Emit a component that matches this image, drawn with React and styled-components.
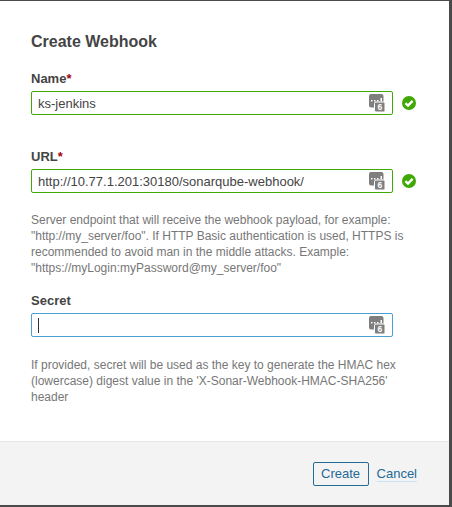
import React from 'react';
import styled, { createGlobalStyle } from 'styled-components';

const Global = createGlobalStyle`
  html, body { margin: 0; padding: 0; background: #fff; }
  body { font-family: "Liberation Sans", Arial, sans-serif; color: #444; }
`;
const Modal = styled.div`
  width: 452px;
  height: 507px;
  box-sizing: border-box;
  display: flex;
  flex-direction: column;
  border-top: 1px solid #4a4a4a;
  border-right: 3px solid #4a4a4a;
  border-bottom: 2px solid #4a4a4a;
  background: #fff;
`;
const Body = styled.div`
  flex: 1;
  padding: 31px 31px 0;
`;
const Title = styled.h2`
  margin: 0 0 18px;
  font-size: 16px;
  line-height: 20px;
  font-weight: bold;
  color: #444;
`;
const Field = styled.div`
  margin-bottom: ${p => p.$gap}px;
`;
const Label = styled.label`
  display: block;
  height: 21px;
  box-sizing: border-box;
  padding-top: 1px;
  font-size: 13px;
  line-height: 16px;
  font-weight: bold;
  color: #444;
`;
const Star = styled.em`
  font-style: normal;
  color: #a4030f;
`;
const Row = styled.div`
  display: flex;
  align-items: center;
  gap: 9px;
`;
const InputBox = styled.div`
  width: 362px;
  height: 24px;
  box-sizing: border-box;
  padding: 0 7px 0 6px;
  display: flex;
  align-items: center;
  justify-content: space-between;
  border: 1px solid ${p => (p.$focus ? '#4b9fd5' : '#3fa804')};
  border-radius: 2px;
  background: #fff;
  font-size: 13px;
  color: #444;
`;
const Caret = styled.span`
  display: block;
  width: 1px;
  height: 15px;
  background: #333;
`;
const Help = styled.p`
  margin: ${p => p.$top}px 0 0;
  width: 374px;
  font-size: 12px;
  line-height: 16px;
  color: #777;
`;
const Footer = styled.div`
  height: 64px;
  box-sizing: border-box;
  padding-right: 32px;
  display: flex;
  align-items: center;
  justify-content: flex-end;
  gap: 8px;
  background: #f3f3f3;
  border-top: 1px solid #e6e6e6;
`;
const CreateBtn = styled.button`
  width: 56px;
  height: 24px;
  padding: 0;
  border: 1px solid #236a97;
  border-radius: 2px;
  background: transparent;
  color: #236a97;
  font-family: inherit;
  font-size: 13px;
  font-weight: normal;
`;
const CancelLink = styled.a`
  font-size: 13px;
  line-height: 15px;
  color: #236a97;
  border-bottom: 1px solid #cae3f2;
`;

const PassIcon = () => (
  <svg width="16" height="18" viewBox="0 0 16 18">
    <rect x="0" y="0" width="14.500" height="13.500" rx="2" fill="#7f7f7f" />
    <path fill="#fff" d="M2 6h1.500v1.500H2zM5 6h1.500v1.500H5zM8 6h1.500v1.500H8zM11.500 4H13v3.500h-1.500z" />
    <rect x="5.500" y="8" width="10.500" height="10" rx="1.500" fill="#7f7f7f" stroke="#fff" strokeWidth="1" />
    <text x="10.800" y="16.300" textAnchor="middle" fontSize="8.500" fontWeight="bold" fill="#fff" fontFamily="Liberation Sans, sans-serif">6</text>
  </svg>
);
const CheckIcon = () => (
  <svg width="14" height="14" viewBox="0 0 14 14">
    <circle cx="7" cy="7" r="7" fill="#3fa804" />
    <path d="M3.400 7.200 6 9.600l4.600-4.800" fill="none" stroke="#fff" strokeWidth="2.400" />
  </svg>
);

const App = () => (
  <Modal>
    <Global />
    <Body>
      <Title>Create Webhook</Title>
      <Field $gap={33}>
        <Label>Name<Star>*</Star></Label>
        <Row>
          <InputBox>ks-jenkins<PassIcon /></InputBox>
          <CheckIcon />
        </Row>
      </Field>
      <Field $gap={16}>
        <Label>URL<Star>*</Star></Label>
        <Row>
          <InputBox>http://10.77.1.201:30180/sonarqube-webhook/<PassIcon /></InputBox>
          <CheckIcon />
        </Row>
        <Help $top={19}>
          Server endpoint that will receive the webhook payload, for example:
          "http://my_server/foo". If HTTP Basic authentication is used, HTTPS is
          recommended to avoid man in the middle attacks. Example:
          "https://myLogin:myPassword@my_server/foo"
        </Help>
      </Field>
      <Field $gap={0}>
        <Label>Secret</Label>
        <Row>
          <InputBox $focus><Caret /><PassIcon /></InputBox>
        </Row>
        <Help $top={20}>
          If provided, secret will be used as the key to generate the HMAC hex
          (lowercase) digest value in the 'X-Sonar-Webhook-HMAC-SHA256' header
        </Help>
      </Field>
    </Body>
    <Footer>
      <CreateBtn>Create</CreateBtn>
      <CancelLink>Cancel</CancelLink>
    </Footer>
  </Modal>
);

export default App;
